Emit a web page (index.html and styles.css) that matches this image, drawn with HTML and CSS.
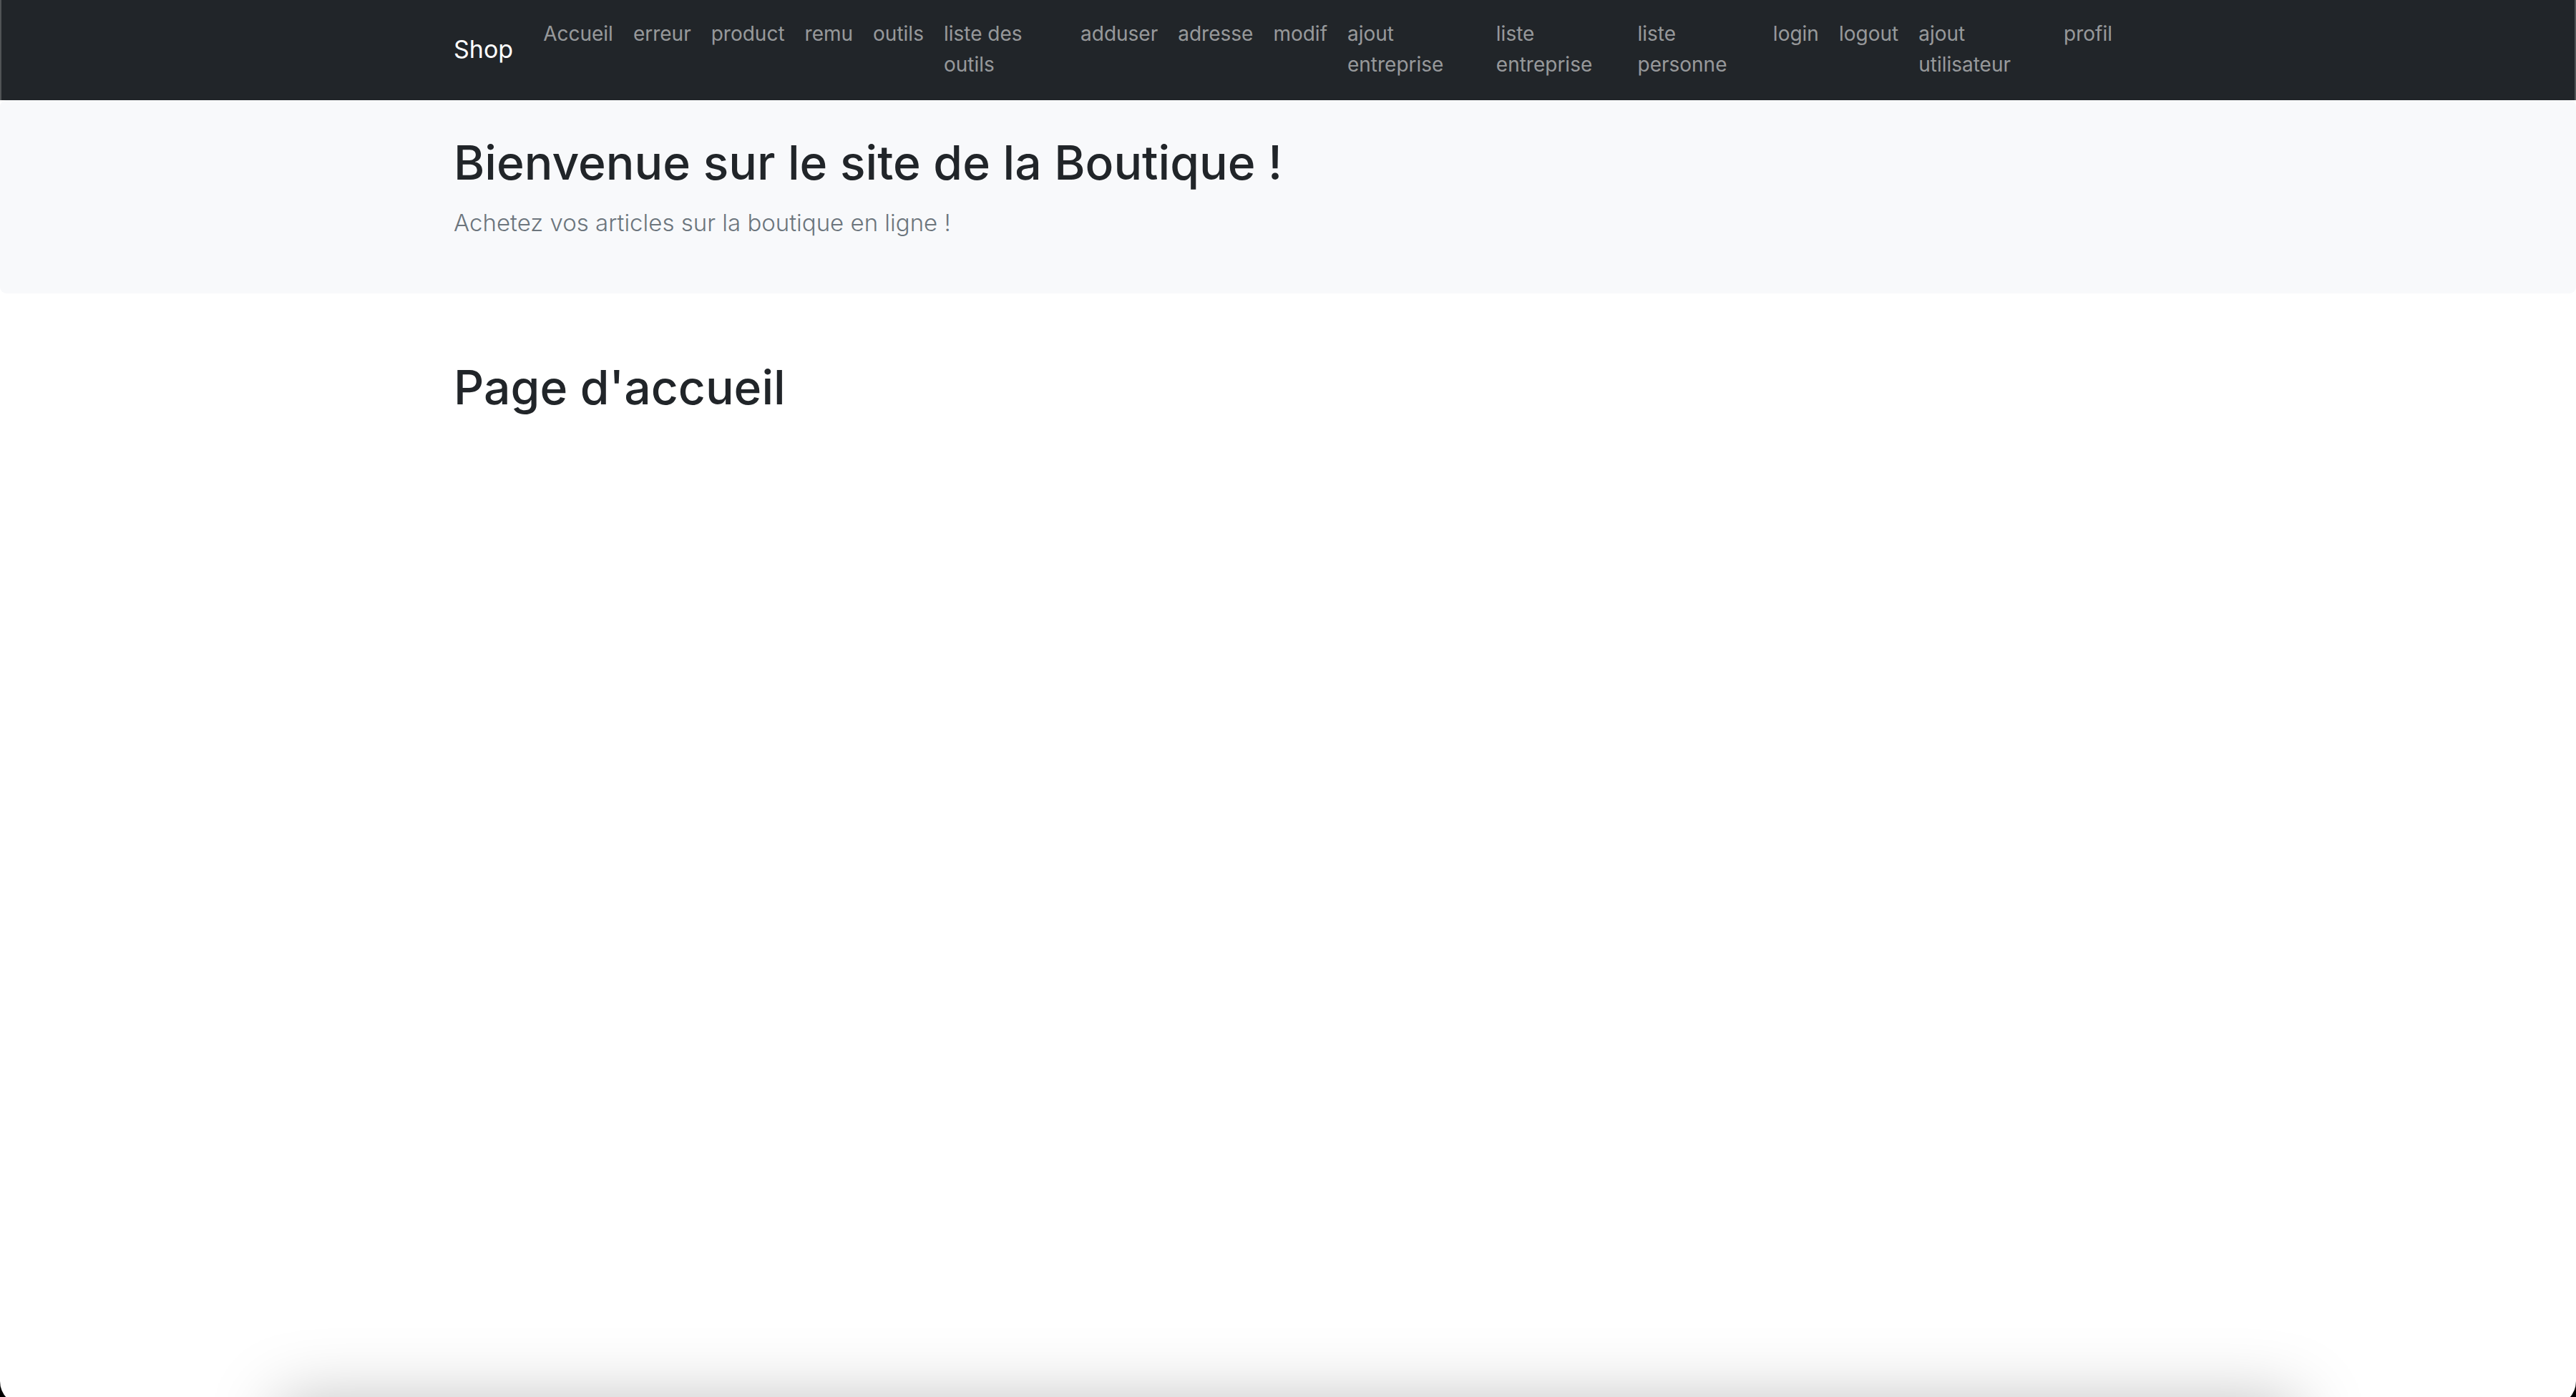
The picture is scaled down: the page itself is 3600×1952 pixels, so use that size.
FILE: index.html
```html
<!DOCTYPE html>
<html lang="fr">
<head>
<meta charset="utf-8">
<title>Shop</title>
<link rel="stylesheet" href="styles.css">
</head>
<body>
<nav class="navbar">
  <div class="container navbar-inner">
    <a class="navbar-brand" href="#">Shop</a>
    <ul class="navbar-nav">
      <li><a class="nav-link" href="#">Accueil</a></li>
      <li><a class="nav-link" href="#">erreur</a></li>
      <li><a class="nav-link" href="#">product</a></li>
      <li><a class="nav-link" href="#">remu</a></li>
      <li><a class="nav-link" href="#">outils</a></li>
      <li><a class="nav-link" href="#">liste des outils</a></li>
      <li><a class="nav-link" href="#">adduser</a></li>
      <li><a class="nav-link" href="#">adresse</a></li>
      <li><a class="nav-link" href="#">modif</a></li>
      <li><a class="nav-link" href="#">ajout entreprise</a></li>
      <li><a class="nav-link" href="#">liste entreprise</a></li>
      <li><a class="nav-link" href="#">liste personne</a></li>
      <li><a class="nav-link" href="#">login</a></li>
      <li><a class="nav-link" href="#">logout</a></li>
      <li><a class="nav-link" href="#">ajout utilisateur</a></li>
      <li><a class="nav-link" href="#">profil</a></li>
    </ul>
  </div>
</nav>
<header class="hero">
  <div class="container">
    <h1 class="title">Bienvenue sur le site de la Boutique !</h1>
    <p class="lead">Achetez vos articles sur la boutique en ligne !</p>
  </div>
</header>
<main class="container main">
  <h1 class="title">Page d'accueil</h1>
</main>
<div class="dock-shadow"></div>
<div class="window-frame"></div>
</body>
</html>
```

FILE: styles.css
```css
* { box-sizing: border-box; }

body {
  margin: 0;
  background: #fff;
  color: #212529;
  font: 400 28px/43px Inter, "Liberation Sans", sans-serif;
}

.container {
  width: 100%;
  max-width: 2376px;
  margin: 0 auto;
  padding: 0 22px;
}

.navbar {
  padding: 12px 0 14px;
  background: #212529;
  border: solid #505356;
  border-width: 0 2px;
}

.navbar-inner {
  display: flex;
  align-items: center;
}

.navbar-brand {
  flex: none;
  margin-right: 28px;
  color: #fff;
  font-size: 34px;
  line-height: 54px;
  text-decoration: none;
}

.navbar-nav {
  display: flex;
  flex: 1;
  margin: 0;
  padding: 0;
  list-style: none;
}

.nav-link {
  display: block;
  padding: 14px;
  color: rgba(255, 255, 255, 0.55);
  text-decoration: none;
}

.hero {
  padding: 44px 0 43px;
  background: #f8f9fb;
  border-radius: 9px;
}

.title {
  margin: 0 0 14px;
  font-size: 66px;
  font-weight: 500;
  line-height: 86px;
}

.lead {
  margin: 0 0 29px;
  color: #6c757d;
  font-size: 33px;
  font-weight: 300;
  line-height: 54px;
}

.main { padding-top: 88px; }

/* Soft shadow rising from the bottom edge of the window */
.dock-shadow {
  position: fixed;
  top: 100%;
  left: 390px;
  right: 390px;
  height: 200px;
  box-shadow: 0 4px 96px rgba(0, 0, 0, 0.25);
  pointer-events: none;
}

/* Black rounded corners at the bottom of the window */
.window-frame {
  position: fixed;
  inset: 0 0 -12px;
  border-radius: 0 0 34px 34px;
  box-shadow: 0 0 0 40px #000;
  pointer-events: none;
}
```
